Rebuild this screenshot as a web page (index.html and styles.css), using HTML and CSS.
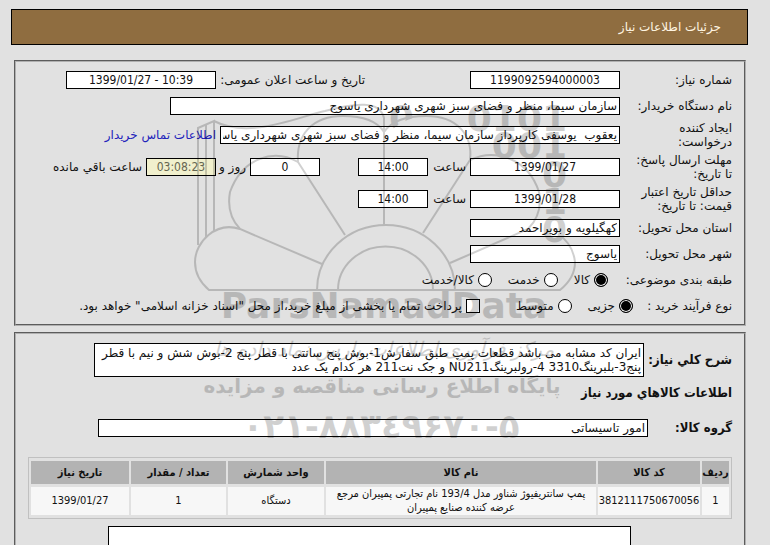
FILE: index.html
```html
<!DOCTYPE html>
<html lang="fa" dir="rtl">
<head>
<meta charset="utf-8">
<title>جزئیات اطلاعات نیاز</title>
<link rel="stylesheet" href="styles.css">
</head>
<body>
<header class="title-bar"><h1>جزئیات اطلاعات نیاز</h1></header>
<main>
<form class="panel details">
  <div class="row">
    <label class="name" for="number">شماره نیاز:</label>
    <input id="number" class="medium code" value="1199092594000003" readonly>
    <label class="announce" for="announced">تاریخ و ساعت اعلان عمومی:</label>
    <input id="announced" class="medium code" value="1399/01/27 - 10:39" readonly>
  </div>
  <div class="row">
    <label class="name" for="buyer">نام دستگاه خریدار:</label>
    <input id="buyer" class="wide" value="سازمان سیما، منظر و فضای سبز شهری شهرداری یاسوج" readonly>
  </div>
  <div class="row tall">
    <label class="name" for="creator">ایجاد کننده<br>درخواست:</label>
    <input id="creator" class="long" value="یعقوب  یوسفی کارپرداز سازمان سیما، منظر و فضای سبز شهری شهرداری یاسوج" readonly>
    <a class="after" href="#contact">اطلاعات تماس خریدار</a>
  </div>
  <div class="row tall">
    <label class="name" for="reply-date">مهلت ارسال پاسخ:<br>تا تاریخ:</label>
    <input id="reply-date" class="medium code" value="1399/01/27" readonly>
    <label class="hour" for="reply-hour">ساعت</label>
    <input id="reply-hour" class="short code" value="14:00" readonly>
    <input id="days" class="short code days" value="0" aria-label="روز" readonly>
    <label class="day" for="days">روز و</label>
    <input id="remaining" class="short code countdown" value="03:08:23" readonly>
    <label class="after" for="remaining">ساعت باقي مانده</label>
  </div>
  <div class="row tall">
    <label class="name" for="price-date">حداقل تاریخ اعتبار<br>قیمت: تا تاریخ:</label>
    <input id="price-date" class="medium code" value="1399/01/28" readonly>
    <label class="hour" for="price-hour">ساعت</label>
    <input id="price-hour" class="short code" value="14:00" readonly>
  </div>
  <div class="row">
    <label class="name" for="province">استان محل تحویل:</label>
    <input id="province" class="medium" value="کهگیلویه و بویراحمد" readonly>
  </div>
  <div class="row">
    <label class="name" for="city">شهر محل تحویل:</label>
    <input id="city" class="medium" value="یاسوج" readonly>
  </div>
  <div class="row" role="radiogroup" aria-label="طبقه بندی موضوعی">
    <span class="name kind">طبقه بندی موضوعی:</span>
    <label class="choice"><input type="radio" name="kind" checked>کالا</label>
    <label class="choice"><input type="radio" name="kind">خدمت</label>
    <label class="choice"><input type="radio" name="kind">کالا/خدمت</label>
  </div>
  <div class="row" role="radiogroup" aria-label="نوع فرآیند خرید">
    <span class="name process">نوع فرآیند خرید :</span>
    <label class="choice"><input type="radio" name="process" checked>جزیی</label>
    <label class="choice"><input type="radio" name="process">متوسط</label>
    <label class="choice credit"><input type="checkbox">پرداخت تمام یا بخشی از مبلغ خرید،از محل "اسناد خزانه اسلامی" خواهد بود.</label>
  </div>
</form>
<section class="panel goods">
  <div class="field">
    <label for="summary">شرح كلي نياز:</label>
    <textarea id="summary" class="summary" rows="2" readonly>ایران کد مشابه می باشد قطعات پمپ طبق سفارش1-بوش پنج سانتی با قطر پنج 2-بوش شش و نیم با قطر
پنج3-بلبرینگ3310 4-رولبرینگNU211 و جک نت211 هر کدام یک عدد</textarea>
  </div>
  <h2>اطلاعات كالاهاي مورد نياز</h2>
  <div class="field group">
    <label for="group">گروه کالا:</label>
    <input id="group" value="امور تاسیساتی" readonly>
  </div>
  <table>
    <colgroup><col class="c-row"><col class="c-code"><col><col class="c-unit"><col class="c-count"><col class="c-date"></colgroup>
    <thead><tr><th>ردیف</th><th>کد کالا</th><th>نام کالا</th><th>واحد شمارش</th><th>تعداد / مقدار</th><th>تاریخ نیاز</th></tr></thead>
    <tbody><tr><td>1</td><td>3812111750670056</td><td>پمپ سانتریفیوژ شناور مدل 193/4 نام تجارتی پمپیران مرجع عرضه کننده صنایع پمپیران</td><td>دستگاه</td><td>1</td><td>1399/01/27</td></tr></tbody>
  </table>
  <textarea class="notes" aria-label="توضیحات" readonly></textarea>
</section>
</main>
<svg class="watermark" viewBox="0 0 390 360" aria-hidden="true">
  <defs><clipPath id="above-petal"><path d="M195 0H240V26Q215 26 200 42H195Z"/></clipPath></defs>
  <g class="mark-lines">
    <path d="M8 155V38L24 31V142M16 147V34M24 31C60 50 110 26 135 21C165 13 190 10 194 28V135"/>
    <path d="M155 145L108 72C106 45 122 26 153 26Q184 26 194 42Q205 26 236 26C267 26 283 45 280 70L233 143"/>
    <path d="M108 72C84 58 52 68 40 102Q36 124 50 139L132 174M280 70C305 58 338 68 349 102Q353 124 338 139L260 173"/>
    <path d="M50 139C26 131 5 152 5 172Q5 188 19 200H370Q385 188 385 172Q383 154 368 144"/>
    <path d="M127 200A69 65 0 0 1 265 200M148 200A47 43 0 0 1 243 200"/>
  </g>
  <g class="mark-bits">
    <text x="224" y="41" clip-path="url(#above-petal)">0</text>
    <text x="377" y="41">0101</text>
    <text x="377" y="68">001</text>
    <text x="377" y="97">0</text>
    <text x="377" y="124">1</text>
    <text x="377" y="152">0</text>
  </g>
  <text class="mark-name" x="194" y="228">ParsNamadData</text>
  <text class="mark-script" x="194" y="266">مرکز فرآوری اطلاعات پارس نماد داده ها</text>
  <text class="mark-line" x="192" y="303">پایگاه اطلاع رسانی مناقصه و مزایده</text>
  <text class="mark-phone" x="191" y="348">۰۲۱-۸۸۳٤۹۶۷۰-۵</text>
</svg>
</body>
</html>
```
FILE: styles.css
```css
* { box-sizing: border-box; }
html { height: 100%; overflow: hidden; }
body {
  margin: 0;
  padding: 9px 22px 0 11px;
  position: relative;
  height: 100%;
  overflow: hidden;
  background: #e1e1e1;
  color: #111;
  font: 12px/14px "DejaVu Sans", sans-serif;
}
.title-bar {
  height: 36px;
  padding: 0 26px;
  display: flex;
  align-items: center;
  border: 1px solid #000;
  background: #8f6d40;
  color: #fff5e2;
}
h1, h2 { margin: 0; font-size: 12px; font-weight: normal; }
main { padding: 15px 2px 0 3px; }
.panel { border: 2px groove #b0b0b0; }
.details { padding: 5px 12px; }
.row { display: flex; align-items: center; height: 26px; white-space: nowrap; }
.row.tall { height: 32px; }
.name { width: 112px; flex: none; }
input, textarea {
  margin: 0;
  padding: 0 2px;
  height: 18px;
  border: 1px solid #000;
  border-radius: 0;
  background: #fff;
  color: #111;
  font: inherit;
}
.code { text-align: center; direction: ltr; font-family: "DejaVu Sans Condensed", "DejaVu Sans", sans-serif; }
.medium { width: 150px; }
.wide { width: 450px; }
.long { width: 400px; }
.short { width: 70px; }
.hour { width: 42px; padding-right: 4px; }
.announce { width: 254px; padding-right: 105px; }
.days { margin-right: 38px; }
.day { width: 34px; padding-right: 4px; }
.after { margin-right: 4px; }
.countdown { background: #f1f0cd; color: #666650; }
a { color: #2222bb; text-decoration: none; }
.choice { display: flex; align-items: center; gap: 4px; margin-left: 16px; }
.choice.credit { margin-right: 20px; margin-left: 0; }
input[type="radio"], input[type="checkbox"] { appearance: none; width: 14px; height: 14px; padding: 0; }
input[type="radio"] { border-radius: 50%; }
input[type="radio"]:checked { background: #000; box-shadow: inset 0 0 0 1px #fff; }
.kind { width: 124px; }
.process { width: 99px; }
.goods { margin-top: 6px; padding: 9px 12px; }
.field {
  display: flex;
  align-items: center;
  justify-content: space-between;
}
.field label, h2 { font: bold 13px/14px "DejaVu Sans Condensed", "DejaVu Sans", sans-serif; }
textarea { display: block; resize: none; overflow: hidden; }
.summary { width: 550px; height: 34px; margin-left: 66px; padding: 2px; white-space: pre; }
h2 { margin: 9px 0 0; }
.group { margin-top: 19px; }
.group input { width: 550px; margin-left: 70px; }
table {
  width: 100%;
  margin-top: 20px;
  table-layout: fixed;
  border: 1px solid #c0c0c0;
  border-spacing: 2px 3px;
  font: 11px/14px "DejaVu Sans Condensed", "DejaVu Sans", sans-serif;
  text-align: center;
}
th, td { padding: 0; }
th { height: 23px; background: #b3b3b3; }
td { height: 28px; background: #f7f7f7; }
.c-row { width: 27px; }
.c-code { width: 102px; }
.c-unit { width: 96px; }
.c-count { width: 95px; }
.c-date { width: 98px; }
.notes { width: 523px; height: 60px; margin: 7px 101px 0 0; }
.watermark {
  position: absolute;
  top: 90px;
  left: 190px;
  width: 390px;
  height: 360px;
  opacity: 0.18;
  pointer-events: none;
}
.mark-lines { fill: none; stroke: #000; stroke-width: 2px; }
.mark-bits { direction: ltr; text-anchor: end; font: bold 36px "DejaVu Sans", sans-serif; }
.mark-name { direction: ltr; text-anchor: middle; font: bold 36px "DejaVu Sans", sans-serif; }
.mark-script { text-anchor: middle; font: italic 20px "DejaVu Sans", sans-serif; }
.mark-line { text-anchor: middle; font: bold 20px "DejaVu Sans", sans-serif; }
.mark-phone { direction: ltr; unicode-bidi: bidi-override; text-anchor: middle; font: bold 34px "DejaVu Sans", sans-serif; }
```
